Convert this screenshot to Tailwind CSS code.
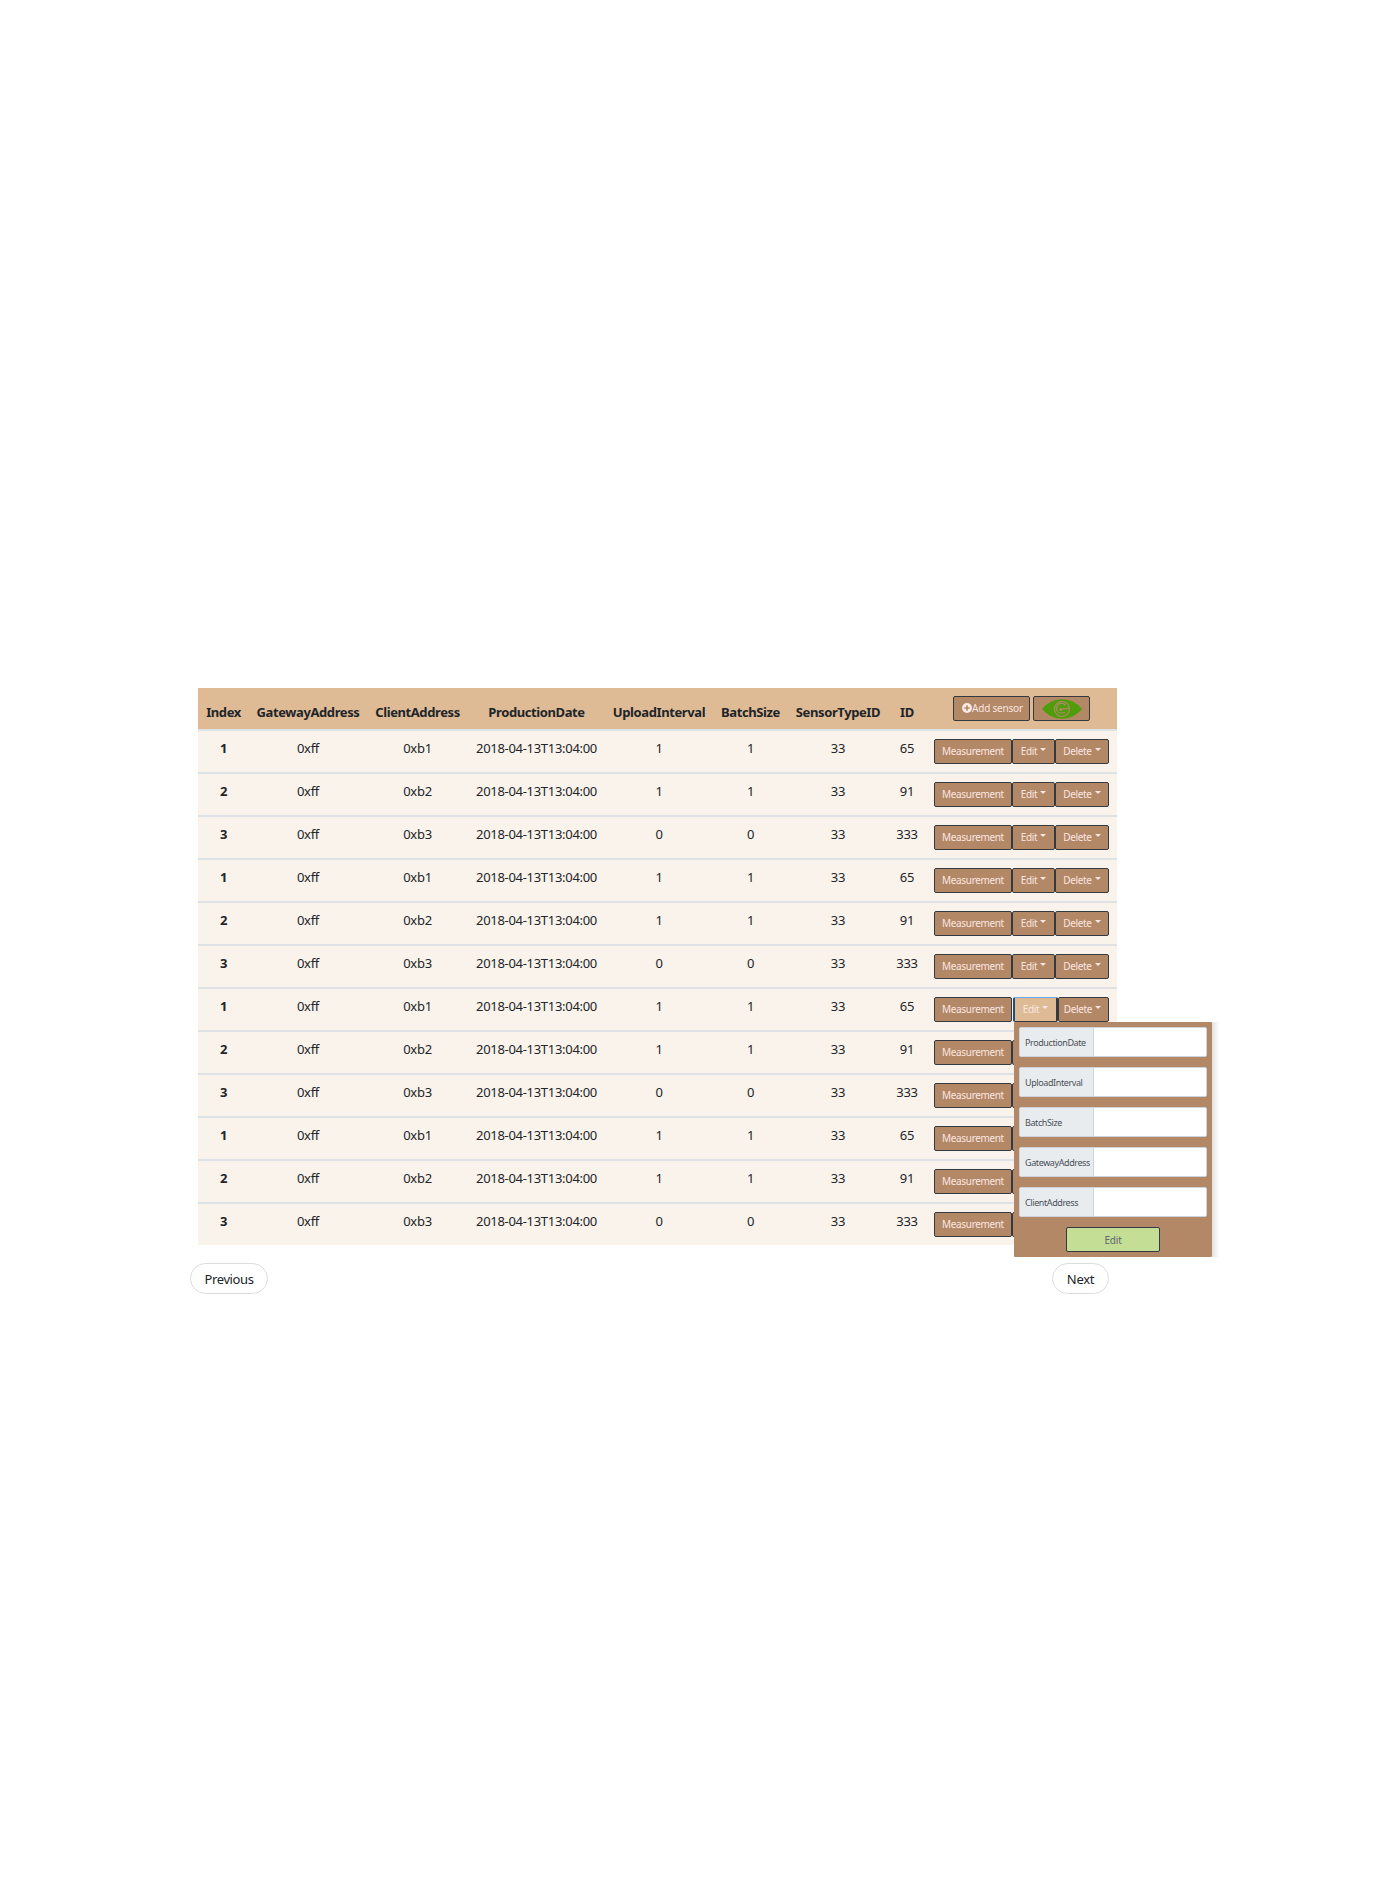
<!DOCTYPE html>
<html lang="en">
<head>
<meta charset="utf-8">
<title>Sensors</title>
<script src="https://cdn.jsdelivr.net/npm/@tailwindcss/browser@4"></script>
</head>
<body class="bg-white text-[#212529] font-['Noto_Sans',sans-serif] text-[13px] leading-5">
<main class="pt-[688px] pl-[190px]">
  <div class="ml-2 w-[919px] bg-[#faf3eb]">
    <div class="grid grid-cols-[51px_118px_101px_137px_108px_75px_100px_38px_191px] h-[41px] bg-[#debb95] text-center font-bold tracking-[-0.4px]">
      <div class="pt-3.5">Index</div>
      <div class="pt-3.5">GatewayAddress</div>
      <div class="pt-3.5">ClientAddress</div>
      <div class="pt-3.5">ProductionDate</div>
      <div class="pt-3.5">UploadInterval</div>
      <div class="pt-3.5">BatchSize</div>
      <div class="pt-3.5">SensorTypeID</div>
      <div class="pt-3.5">ID</div>
      <div class="flex gap-[3px] pt-2 pl-[27px] text-[10px] font-normal tracking-[-0.2px] text-[#fbe6e1]">
        <button class="flex w-[77px] h-[25px] items-center pl-2 pb-px rounded-[2px] border border-[#343a40] bg-[#b38867] whitespace-nowrap">
          <svg class="size-2.5 shrink-0" viewBox="0 0 10 10"><circle cx="5" cy="5" r="4.9" fill="#ffece6"/><path d="M2.3 5h5.4M5 2.3v5.4" stroke="#b38867" stroke-width="1.6"/></svg>Add sensor
        </button>
        <button class="flex w-[57px] h-[25px] items-center justify-center rounded-[2px] border border-[#343a40] bg-[#b38867]">
          <svg class="w-10 h-5" viewBox="0 0 40 20" fill="none"><path d="M0 10Q8 .2 20 .2T40 10Q32 19.8 20 19.8T0 10Z" fill="#4f9d08"/><circle cx="20" cy="10" r="7.5" stroke="#b38867" stroke-width="1.2"/><path d="M15.6 12.6A5 5 0 0 1 23.5 6.3M18.5 10.4L27 9.3" stroke="#b38867" stroke-width="1.2"/><circle cx="18.8" cy="10.4" r="1.5" fill="#b38867"/><path d="M16 13.8h7.5" stroke="#b38867"/></svg>
        </button>
      </div>
    </div>
    <div id="rows"></div>
  </div>
  <div class="flex justify-between w-[919px] mt-[18px]">
    <button class="w-[78px] h-[31px] rounded-full border border-[#dddddd] bg-white tracking-[-0.4px] pt-px">Previous</button>
    <button class="w-[57px] h-[31px] rounded-full border border-[#dddddd] bg-white tracking-[-0.3px] pt-px">Next</button>
  </div>
</main>
<script>
const sensors = [
  ['0xff', '0xb1', '2018-04-13T13:04:00', 1, 1, 33, 65],
  ['0xff', '0xb2', '2018-04-13T13:04:00', 1, 1, 33, 91],
  ['0xff', '0xb3', '2018-04-13T13:04:00', 0, 0, 33, 333],
];
const caret = '<svg class="ml-[3px] mb-[3px] w-1.5 h-[3px] shrink-0" viewBox="0 0 6 3"><path d="M0 0h6L3 3Z" fill="currentColor"/></svg>';
const button = 'flex h-[25px] items-center justify-center pb-px rounded-[2px] border border-[#343a40] bg-[#b38867]';
const field = name => `
  <label class="flex h-[30px] mb-2.5 border border-[#ced4da] rounded-[2px] bg-white">
    <span class="flex w-[74px] items-center pl-[5px] pt-px border-r border-[#ced4da] bg-[#e9ecef] text-[9px] tracking-[-0.4px] text-[#495057]">${name}</span>
  </label>`;
const menu = `
  <div class="absolute left-20 top-[25px] z-10 w-[198px] h-[235px]">
    <div class="absolute left-[198px] top-0 h-full w-[7px] bg-linear-to-r from-black/12 to-transparent"></div>
    <div class="relative h-full rounded-[1px] bg-[#b38867] px-[5px] pt-[5px]">
      ${['ProductionDate', 'UploadInterval', 'BatchSize', 'GatewayAddress', 'ClientAddress'].map(field).join('')}
      <button class="block w-[94px] h-[25px] mx-auto rounded-[2px] border border-[#343a40] bg-[#c5de95] text-[10px] leading-none tracking-[-0.2px] text-[#5d6670]">Edit</button>
    </div>
  </div>`;
document.getElementById('rows').innerHTML = Array.from({ length: 12 }, (_, i) => {
  const open = i === 6;
  const edit = open
    ? `<button class="relative flex h-[25px] items-center justify-center pb-px rounded-[2px] border-x-2 border-y border-b-[#343a40] border-r-[#343a40] border-l-[#1d4f80] border-t-[#66aaf2] bg-[#debb95] w-[45px] ml-px">Edit${caret}</button>`
    : `<button class="${button} w-[43px]">Edit${caret}</button>`;
  return `
  <div class="grid grid-cols-[51px_118px_101px_137px_108px_75px_100px_38px_191px] h-[43px] border-t-2 border-[#dee2e6] text-center tracking-[-0.3px]">
    <div class="pt-[7px] font-bold">${i % 3 + 1}</div>
    ${sensors[i % 3].map(v => `<div class="pt-[7px]">${v}</div>`).join('')}
    <div class="pt-2 pl-2">
      <div class="relative flex text-[10px] tracking-[-0.35px] text-[#fbe6e1]">
        <button class="${button} w-[78px]">Measurement</button>
        ${edit}
        <button class="${button} ${open ? 'w-[51px] pr-0.5' : 'w-[54px]'}">Delete${caret}</button>
        ${open ? menu : ''}
      </div>
    </div>
  </div>`;
}).join('');
</script>
</body>
</html>
